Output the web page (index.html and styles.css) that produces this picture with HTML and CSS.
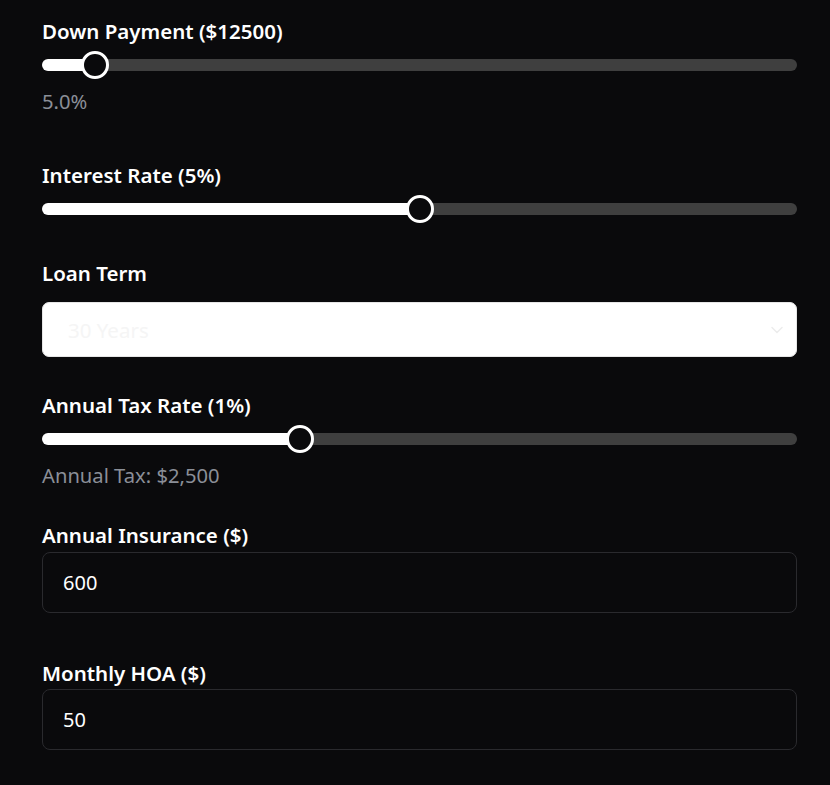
FILE: index.html
```html
<!DOCTYPE html>
<html lang="en">
<head>
<meta charset="utf-8">
<title>Mortgage Calculator</title>
<link rel="stylesheet" href="styles.css">
</head>
<body>
<div class="form">
  <div class="field gap-lg">
    <label class="label" for="down">Down Payment ($12500)</label>
    <input id="down" class="range" type="range" min="0" max="1000" step="1" value="54" style="--p:0.054">
    <div class="hint">5.0%</div>
  </div>
  <div class="field gap-md">
    <label class="label" for="rate">Interest Rate (5%)</label>
    <input id="rate" class="range" type="range" min="0" max="10" step="0.1" value="5" style="--p:0.5">
  </div>
  <div class="field gap-sel">
    <label class="label" for="term">Loan Term</label>
    <div class="select-wrap">
      <select id="term" class="select">
        <option>30 Years</option>
        <option>20 Years</option>
        <option>15 Years</option>
      </select>
      <svg class="chevron" viewBox="0 0 12 8" width="12" height="8"><path d="M1 1.5l5 5 5-5" fill="none" stroke="currentColor" stroke-width="1.5" stroke-linecap="round" stroke-linejoin="round"/></svg>
    </div>
  </div>
  <div class="field gap-tax">
    <label class="label" for="tax">Annual Tax Rate (1%)</label>
    <input id="tax" class="range" type="range" min="0" max="1000" step="1" value="336" style="--p:0.336">
    <div class="hint">Annual Tax: $2,500</div>
  </div>
  <div class="field gap-lg">
    <label class="label" for="ins">Annual Insurance ($)</label>
    <input id="ins" class="text-input" type="text" value="600">
  </div>
  <div class="field">
    <label class="label" for="hoa">Monthly HOA ($)</label>
    <input id="hoa" class="text-input hoa" type="text" value="50">
  </div>
</div>
</body>
</html>
```

FILE: styles.css
```css
html, body {
  margin: 0;
  background: #0a0a0c;
}
body {
  font-family: "Noto Sans", "Open Sans", sans-serif;
  color: #ffffff;
}
.form {
  padding: 17px 33px 0 42px;
  display: flex;
  flex-direction: column;
}
.field {
  display: flex;
  flex-direction: column;
}
.gap-lg { margin-bottom: 46px; }
.gap-md { margin-bottom: 36px; }
.gap-sel { margin-bottom: 34px; }
.gap-tax { margin-bottom: 32px; }

.label {
  font-size: 20.5px;
  font-weight: 600;
  line-height: 28px;
  color: #ffffff;
}
.hint {
  margin-top: 8px;
  font-size: 20.2px;
  line-height: 28px;
  color: #8b8f98;
}

.range {
  -webkit-appearance: none;
  appearance: none;
  margin: 6px 0 0;
  width: 100%;
  height: 28px;
  background: transparent;
  padding: 0;
}
.range::-webkit-slider-runnable-track {
  height: 12px;
  border-radius: 6px;
  background: linear-gradient(to right, #ffffff calc(14px + var(--p) * (100% - 28px)), #3f3f3f 0);
}
.range::-webkit-slider-thumb {
  -webkit-appearance: none;
  appearance: none;
  width: 28px;
  height: 28px;
  margin-top: -8px;
  border-radius: 50%;
  border: 3px solid #ffffff;
  background: #0a0a0c;
  box-sizing: border-box;
}

.select-wrap {
  position: relative;
  margin-top: 15px;
}
.select {
  -webkit-appearance: none;
  appearance: none;
  width: 100%;
  height: 55px;
  margin: 0;
  padding: 0 40px 0 25px;
  background: #ffffff;
  color: #f5f5f5;
  border: 1px solid #e6e6e6;
  border-radius: 7px;
  font-family: inherit;
  font-size: 20.5px;
  box-sizing: border-box;
}
.chevron {
  position: absolute;
  right: 14px;
  top: 24px;
  color: #ececec;
}

.text-input {
  margin-top: 3px;
  height: 61px;
  width: 100%;
  box-sizing: border-box;
  padding: 0 20px;
  background: #0a0a0c;
  border: 1px solid #2a2a2e;
  border-radius: 8px;
  color: #ffffff;
  font-family: inherit;
  font-size: 20px;
  outline: none;
}
.text-input.hoa { margin-top: 2px; }
```
